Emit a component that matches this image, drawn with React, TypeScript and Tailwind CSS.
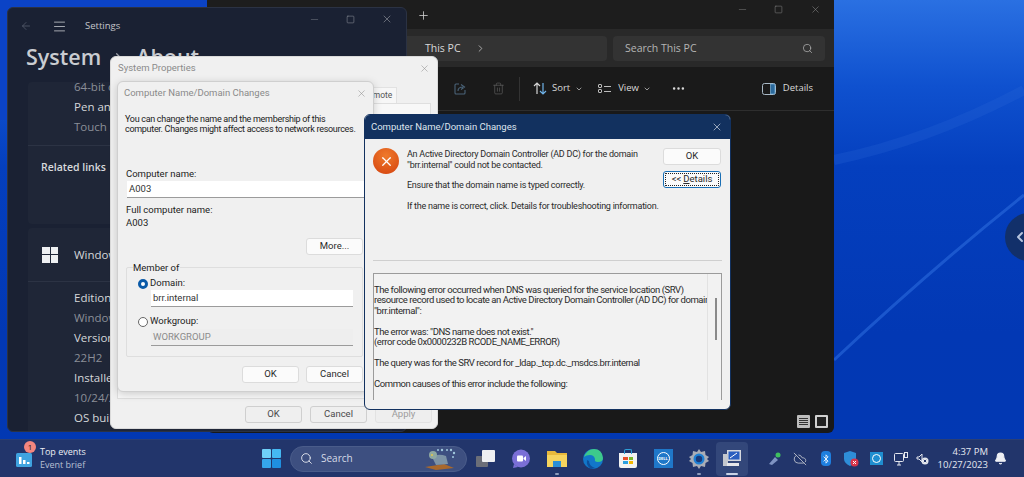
import React from "react";
import { X, Minus, Square, ArrowLeft, Menu, Plus, ChevronRight, ChevronDown, ChevronLeft, Search, Trash2, Ellipsis, Bell, Bluetooth, CloudOff } from "lucide-react";

const font = "font-['Open_Sans','Noto_Sans',sans-serif]";
const dialogFont = "font-['Roboto','Liberation_Sans',sans-serif]";

function Btn({ children, className = "" }: { children: React.ReactNode; className?: string }) {
  return (
    <div className={`h-[17px] w-[57px] flex items-center justify-center rounded-[3px] bg-[#fbfbfb] border border-[#dcdcdc] text-[9.5px] text-[#2a2a2a] ${className}`}>
      {children}
    </div>
  );
}

function SettingsRow({ children, dim }: { children: React.ReactNode; dim?: boolean }) {
  return <div className={`h-[20px] leading-[20px] text-[11.5px] whitespace-nowrap ${dim ? "text-[#8b8f98]" : "text-[#d5d7da]"}`}>{children}</div>;
}

function SettingsWindow() {
  return (
    <div className="absolute left-[7px] top-[7px] w-[400px] h-[425px] rounded-[6px] bg-[#1a2133] border border-[#2b3243] overflow-hidden flex flex-col">
      <div className="h-[36px] flex items-center text-[#c4c6cb] shrink-0">
        <ArrowLeft size={12} className="ml-[12px] text-[#5a6070]" strokeWidth={1.5} />
        <Menu size={15} className="ml-[20px]" strokeWidth={1.3} />
        <span className="ml-[18px] text-[9.5px]">Settings</span>
        <Minus size={11} className="ml-auto mr-[26px] mb-[14px] text-[#6a6f7c]" strokeWidth={1.3} />
        <Square size={9} className="mr-[26px] mb-[14px] text-[#9a9da6]" strokeWidth={1.3} />
        <X size={12} className="mr-[13px] mb-[14px] text-[#9a9da6]" strokeWidth={1.2} />
      </div>
      <div className="h-[26px] ml-[18px] flex items-center gap-[10px] text-[21.5px] font-semibold text-[#c9ccd1] shrink-0 leading-none">
        <span>System</span>
        <ChevronRight size={15} className="text-[#9a9da6]" />
        <span>About</span>
      </div>
      <div className="ml-[20px] mr-[14px] mt-[12px] h-[142px] bg-[#1f2637] rounded-[4px] shrink-0 flex flex-col">
        <div className="pl-[46px] h-[69px] border-b border-[#2c3344] -mt-[5px]">
          <SettingsRow dim>64-bit operating system</SettingsRow>
          <SettingsRow>Pen and touch</SettingsRow>
          <SettingsRow dim>Touch support</SettingsRow>
        </div>
        <div className="pl-[13px] pt-[14px] text-[10.5px] font-semibold text-[#d8dadd]">Related links</div>
      </div>
      <div className="ml-[20px] mr-[14px] mt-[4px] flex-1 bg-[#1f2637] rounded-t-[4px] flex flex-col">
        <div className="h-[54px] flex items-center pl-[14px] border-b border-[#2c3344] shrink-0">
          <div className="grid grid-cols-2 gap-[1px] w-[16px] h-[16px]">
            <i className="bg-[#eef0f2]" /><i className="bg-[#eef0f2]" /><i className="bg-[#eef0f2]" /><i className="bg-[#eef0f2]" />
          </div>
          <span className="ml-[16px] text-[11.5px] text-[#d5d7da]">Windows specifications</span>
        </div>
        <div className="pl-[46px] pt-[6px]">
          <SettingsRow>Edition</SettingsRow>
          <SettingsRow dim>Windows 11 Pro</SettingsRow>
          <SettingsRow>Version</SettingsRow>
          <SettingsRow dim>22H2</SettingsRow>
          <SettingsRow>Installed on</SettingsRow>
          <SettingsRow dim>10/24/2023</SettingsRow>
          <SettingsRow>OS build</SettingsRow>
        </div>
      </div>
    </div>
  );
}

function ExplorerWindow() {
  return (
    <div className="absolute left-[207px] -top-[4px] w-[627px] h-[437px] rounded-[6px] bg-[#191919] overflow-hidden flex flex-col text-[#d9d9d9]">
      <div className="h-[33px] bg-[#1d1d1d] flex items-start shrink-0 pt-[6px]">
        <Plus size={13} className="ml-[210px] mt-[7px] text-[#cfcfcf]" strokeWidth={1.5} />
        <Minus size={11} className="ml-auto mr-[26px] mt-[2px] text-[#6f6f6f]" strokeWidth={1.3} />
        <Square size={9} className="mr-[27px] mt-[3px] text-[#8c8c8c]" strokeWidth={1.3} />
        <X size={11} className="mr-[13px] mt-[2px] text-[#8c8c8c]" strokeWidth={1.2} />
      </div>
      <div className="h-[38px] bg-[#292929] flex items-center gap-[6px] pr-[9px] pt-[1px] shrink-0">
        <div className="flex-1 h-[25px] bg-[#333333] rounded-[4px] flex items-center pl-[218px] text-[10.5px]">
          <span>This PC</span>
          <ChevronRight size={11} className="ml-[14px]" strokeWidth={1.5} />
        </div>
        <div className="w-[212px] h-[25px] bg-[#333333] rounded-[4px] flex items-center px-[12px] text-[10.5px] text-[#b5b5b5]">
          <span>Search This PC</span>
          <Search size={11} className="ml-auto" strokeWidth={1.6} />
        </div>
      </div>
      <div className="h-[44px] bg-[#1a1a1a] border-b border-[#2e2e2e] flex items-center text-[9.5px] shrink-0">
        <svg width="13" height="13" viewBox="0 0 13 13" fill="none" stroke="#4a6378" strokeWidth="1.1" className="ml-[247px]">
          <path d="M5 2 H2 Q1 2 1 3 V11 Q1 12 2 12 H10 Q11 12 11 11 V8" />
          <path d="M4 9 Q4 5 9 5 M7 2.5 L10.5 5 L7 7.5" />
        </svg>
        <Trash2 size={13} className="ml-[25px] text-[#5c5c5c]" strokeWidth={1.3} />
        <div className="ml-[14px] w-px h-[24px] bg-[#333]" />
        <svg width="14" height="13" viewBox="0 0 14 13" fill="none" strokeWidth="1.2" className="ml-[13px]">
          <path d="M4 12 V1 M1 4 L4 1 L7 4" stroke="#d5d5d5" />
          <path d="M10 1 V12 M7 9 L10 12 L13 9" stroke="#6fb3ea" />
        </svg>
        <span className="ml-[5px]">Sort</span>
        <ChevronDown size={8} className="ml-[5px]" />
        <div className="ml-[15px] flex flex-col gap-[1px] text-[#bbb]">
          <div className="flex items-center gap-[2px]"><i className="w-[4px] h-[4px] border border-[#bbb] rounded-[1px]" /><i className="w-[7px] h-px bg-[#bbb]" /></div>
          <div className="flex items-center gap-[2px]"><i className="w-[4px] h-[4px] border border-[#bbb] rounded-[1px]" /><i className="w-[7px] h-px bg-[#bbb]" /></div>
        </div>
        <span className="ml-[7px]">View</span>
        <ChevronDown size={8} className="ml-[4px]" />
        <Ellipsis size={15} className="ml-[20px]" />
        <svg width="14" height="12" viewBox="0 0 14 12" fill="none" className="ml-auto">
          <rect x="0.5" y="0.5" width="13" height="11" rx="2" stroke="#a9b9c6" />
          <path d="M8.5 1 H12 Q13 1 13 2 V10 Q13 11 12 11 H8.5 Z" fill="#2c6a9c" stroke="#8cc4ee" strokeWidth="0.6" />
        </svg>
        <span className="ml-[7px] mr-[21px]">Details</span>
      </div>
      <div className="flex-1" />
      <div className="h-[21px] flex items-center justify-end gap-[5px] pr-[6px] pb-[2px] shrink-0">
        <div className="w-[13px] h-[13px] bg-[#bdbdbd] rounded-[1px] flex flex-col justify-center gap-[1px] px-[2px]">
          <i className="h-px bg-[#333]" /><i className="h-px bg-[#333]" /><i className="h-px bg-[#333]" /><i className="h-px bg-[#333]" />
        </div>
        <div className="w-[13px] h-[13px] border-2 border-[#d0d0d0] rounded-[1px] bg-[#222]" />
      </div>
    </div>
  );
}

function SystemProperties() {
  return (
    <div className={`absolute left-[110px] top-[56px] w-[328px] h-[373px] rounded-[6px] bg-[#f0f0f0] border border-[#dadada] flex flex-col ${dialogFont}`}>
      <div className="h-[23px] flex items-center pl-[7px] pr-[7px] text-[9.5px] text-[#8a8a8a] shrink-0">
        <span>System Properties</span>
        <X size={11} className="ml-auto text-[#8f8f8f]" strokeWidth={1.2} />
      </div>
      <div className="flex justify-end pr-[40px] h-[23px] items-end shrink-0">
        <div className="h-[16px] w-[60px] pl-[25px] bg-[#f7f7f7] border border-[#e2e2e2] border-b-0 text-[8.5px] leading-[15px] text-[#555]">Remote</div>
      </div>
      <div className="flex-1 mx-[6px] bg-[#f8f8f8] border border-[#dfdfdf]" />
      <div className="h-[29px] flex items-start justify-end gap-[8px] pr-[5px] pt-[7px] shrink-0">
        <Btn className="!bg-[#efefef] !border-[#cfcfcf] !text-[#4a4a4a]">OK</Btn>
        <Btn className="!bg-[#efefef] !border-[#cfcfcf] !text-[#4a4a4a]">Cancel</Btn>
        <Btn className="!bg-[#eeeeee] !border-[#e2e2e2] !text-[#9c9c9c]">Apply</Btn>
      </div>
    </div>
  );
}

function InputLine({ text, className = "" }: { text: string; className?: string }) {
  return (
    <div className={`h-[17px] bg-white border-b border-[#9b9b9b] pl-[2px] text-[9.5px] leading-[15px] text-[#333] ${className}`}>{text}</div>
  );
}

function NameDialog() {
  return (
    <div className={`absolute left-[117px] top-[81px] w-[257px] h-[311px] rounded-[6px] bg-[#f0f0f0] border border-[#cfcfcf] shadow-[0_2px_8px_rgba(0,0,0,0.18)] flex flex-col text-[#222] text-[9.5px] ${dialogFont}`}>
      <div className="h-[23px] flex items-center pl-[6px] pr-[6px] text-[#8a8a8a] shrink-0">
        <span className="text-[9.5px]">Computer Name/Domain Changes</span>
        <X size={11} className="ml-auto text-[#8f8f8f]" strokeWidth={1.2} />
      </div>
      <div className="pl-[7px] pt-[9px] leading-[10px] text-[9px] tracking-[-0.3px] whitespace-nowrap h-[64px] shrink-0">
        You can change the name and the membership of this<br />computer. Changes might affect access to network resources.
      </div>
      <div className="pl-[8px] leading-[10px] h-[12px] shrink-0">Computer name:</div>
      <InputLine text="A003" className="ml-[9px] shrink-0 w-[240px]" />
      <div className="pl-[8px] mt-[6px] leading-[11px] shrink-0">Full computer name:</div>
      <div className="pl-[8px] mt-[2px] leading-[11px] shrink-0">A003</div>
      <div className="flex justify-end pr-[10px] mt-[10px] shrink-0"><Btn>More...</Btn></div>
      <div className="relative mx-[8px] mt-[12px] h-[90px] border border-[#dedede] rounded-[2px] shrink-0 w-[237px] pl-[11px] pt-[9px]">
        <span className="absolute left-[6px] -top-[6px] bg-[#f0f0f0] pr-[1px] leading-[11px]">Member of</span>
        <div className="flex items-center h-[11px] mt-[1px]">
          <span className="w-[10px] h-[10px] rounded-full border-[3px] border-[#0a5aa8] bg-white shrink-0" />
          <span className="ml-[2px]">Domain:</span>
        </div>
        <InputLine text="brr.internal" className="ml-[13px] mr-[9px] mt-[1px]" />
        <div className="flex items-center h-[11px] mt-[9px]">
          <span className="w-[10px] h-[10px] rounded-full border border-[#666] bg-white shrink-0" />
          <span className="ml-[2px]">Workgroup:</span>
        </div>
        <InputLine text="WORKGROUP" className="ml-[13px] mr-[9px] mt-[2px] !bg-[#eeeeee] !text-[#8b8b8b]" />
      </div>
      <div className="flex justify-end gap-[7px] pr-[10px] mt-[9px] shrink-0">
        <Btn>OK</Btn>
        <Btn>Cancel</Btn>
      </div>
    </div>
  );
}

function ErrorDialog() {
  return (
    <div className={`absolute left-[364px] top-[114px] w-[367px] h-[296px] rounded-[6px] bg-[#f0f0f0] border border-[#12315f] overflow-hidden flex flex-col text-[9.5px] text-[#2a2a2a] ${dialogFont}`}>
      <div className="h-[24px] bg-[#12315f] flex items-center pl-[6px] pr-[7px] text-[#dfe5ee] text-[9.5px] shrink-0">
        <span>Computer Name/Domain Changes</span>
        <X size={12} className="ml-auto" strokeWidth={1.3} />
      </div>
      <div className="flex h-[121px] shrink-0 pl-[8px] pr-[9px]">
        <div className="w-[26px] h-[26px] mt-[9px] rounded-full bg-[radial-gradient(circle_at_50%_30%,#ef7a2c,#d4420e)] flex items-center justify-center shrink-0">
          <X size={15} className="text-white" strokeWidth={2} />
        </div>
        <div className="ml-[8px] pt-[10px] leading-[10.5px] text-[9px] whitespace-nowrap tracking-[-0.25px]">
          <div>An Active Directory Domain Controller (AD DC) for the domain<br />"brr.internal" could not be contacted.</div>
          <div className="mt-[10px]">Ensure that the domain name is typed correctly.</div>
          <div className="mt-[10px]">If the name is correct, click. Details for troubleshooting information.</div>
        </div>
        <div className="ml-auto pt-[9px] flex flex-col gap-[6px] shrink-0">
          <Btn className="!w-[58px]">OK</Btn>
          <Btn className="!w-[58px] !border-[#1a6fb5] outline-1 outline-dotted outline-offset-[-3px] outline-[#222]">&lt;&lt; <u className="ml-[2px]">D</u>etails</Btn>
        </div>
      </div>
      <div className="mx-[8px] h-px bg-[#cfcfcf] shrink-0" />
      <div className="relative mx-[8px] mt-[12px] flex-1 mb-[9px] bg-[#f2f2f2] border-t border-x border-[#9b9b9b] overflow-hidden leading-[10.4px] tracking-[-0.43px] whitespace-nowrap pt-[11px]">
        <div>The following error occurred when DNS was queried for the service location (SRV)</div>
        <div>resource record used to locate an Active Directory Domain Controller (AD DC) for domain</div>
        <div>"brr.internal":</div>
        <div className="h-[10.4px]" />
        <div>The error was: "DNS name does not exist."</div>
        <div>(error code 0x0000232B RCODE_NAME_ERROR)</div>
        <div className="h-[10.4px]" />
        <div>The query was for the SRV record for _ldap._tcp.dc._msdcs.brr.internal</div>
        <div className="h-[10.4px]" />
        <div>Common causes of this error include the following:</div>
        <div className="h-[10.4px]" />
        <div className="pl-[5px]">- The DNS SRV records required to locate a AD DC for the domain are not registered</div>
        <div className="absolute right-0 top-0 bottom-0 w-[14px] bg-[#f2f2f2] border-l border-[#e2e2e2]">
          <div className="absolute left-[7px] top-[24px] w-[2px] h-[42px] bg-[#8a8a8a]" />
        </div>
      </div>
    </div>
  );
}

const TaskSlot = ({ children, w = 36, active, running }: { children: React.ReactNode; w?: number; active?: boolean; running?: boolean }) => (
  <div style={{ width: w }} className={`relative h-[34px] flex items-center justify-center rounded-[4px] shrink-0 ${active ? "bg-[#33477a]" : ""}`}>
    {children}
    {running && <i className={`absolute bottom-[1px] h-[2px] rounded-full ${active ? "w-[12px] bg-[#c9d3e6]" : "w-[4px] bg-[#8e9cbc]"}`} />}
  </div>
);

function Taskbar() {
  return (
    <div className="absolute left-0 right-0 bottom-0 h-[38px] bg-[#22356b] border-t border-[#2b3f75] flex items-center text-[#e6e9f1]">
      <div className="relative w-[252px] shrink-0 pl-[16px] flex items-center">
        <svg width="16" height="14" viewBox="0 0 16 14" className="shrink-0 mt-[2px]">
          <rect width="16" height="14" rx="1.5" fill="#3fa3e0" />
          <rect x="3" y="4" width="2.5" height="7" fill="#fff" />
          <rect x="7" y="7" width="2.5" height="4" fill="#fff" />
          <rect x="11" y="9" width="2.5" height="2" fill="#fff" />
        </svg>
        <span className="absolute left-[24px] top-[-6px] w-[12px] h-[12px] rounded-full bg-[#f4867f] text-[#2a1a1a] text-[8px] leading-[12px] text-center">1</span>
        <div className="ml-[8px] leading-[13px] -mt-[2px]">
          <div className="text-[9px] text-[#eceef4]">Top events</div>
          <div className="text-[9px] text-[#b8c0d4]">Event brief</div>
        </div>
      </div>
      <TaskSlot w={38}>
        <svg width="19" height="19" viewBox="0 0 19 19">
          <rect x="0" y="0" width="9" height="9" rx="1" fill="#6fd0f8" />
          <rect x="10" y="0" width="9" height="9" rx="1" fill="#45b8f2" />
          <rect x="0" y="10" width="9" height="9" rx="1" fill="#35a6ec" />
          <rect x="10" y="10" width="9" height="9" rx="1" fill="#1f8fe0" />
        </svg>
      </TaskSlot>
      <div className="w-[177px] h-[26px] rounded-full bg-[#3d4f80] border border-[#4a5c8a] flex items-center pl-[9px] relative shrink-0">
        <Search size={13} className="text-[#e3e6ee]" strokeWidth={1.7} />
        <span className="ml-[8px] text-[10px] text-[#d6dbe7]">Search</span>
        <svg width="34" height="24" viewBox="0 0 34 24" className="absolute right-[8px] top-0">
          <path d="M1 20 L20 17 L30 21 L12 23 Z" fill="#a9682c" />
          <path d="M8 10 Q14 6 22 9 L24 17 L12 18 Z" fill="#7d93a6" />
          <circle cx="9" cy="8" r="4" fill="#8fa8a0" />
          <circle cx="8" cy="8" r="1" fill="#e6c64a" />
          <g fill="#9fc6dc">
            <circle cx="18" cy="3" r="1.2" /><circle cx="23" cy="3" r="1" /><circle cx="27" cy="3" r="1.2" />
            <circle cx="30" cy="6" r="1.2" /><circle cx="29" cy="10" r="1" /><circle cx="14" cy="3" r="1" />
          </g>
        </svg>
      </div>
      <div className="flex items-center shrink-0">
        <TaskSlot>
          <div className="relative w-[19px] h-[17px]">
            <i className="absolute left-0 bottom-0 w-[12px] h-[11px] bg-[#6b6e78] rounded-[1px]" />
            <i className="absolute right-0 top-0 w-[13px] h-[12px] bg-[#eff0f2] rounded-[1px]" />
          </div>
        </TaskSlot>
        <TaskSlot>
          <svg width="20" height="20" viewBox="0 0 20 20">
            <circle cx="10" cy="9.5" r="9" fill="#7a6fd6" />
            <path d="M3 15 L2 19 L7 18 Z" fill="#7a6fd6" />
            <rect x="6" y="6.5" width="6" height="6" rx="1" fill="#fff" />
            <path d="M12.5 9 L15 7 L15 12 L12.5 10 Z" fill="#fff" />
          </svg>
        </TaskSlot>
        <TaskSlot running>
          <svg width="20" height="18" viewBox="0 0 20 18">
            <path d="M0 1 H8 L10 3 H20 V17 H0 Z" fill="#e8b93c" />
            <rect x="0" y="5" width="20" height="12" fill="#f6d45e" />
            <rect x="6" y="11" width="8" height="6" fill="#2b8fd6" />
          </svg>
        </TaskSlot>
        <TaskSlot>
          <svg width="20" height="20" viewBox="0 0 20 20">
            <circle cx="10" cy="10" r="10" fill="#1277c9" />
            <path d="M1 8 Q4 0 11 0 Q19 0 20 9 Q20 13 15 13 Q11 13 12 10 Q11 6 7 6 Q3 6 1 8 Z" fill="#3dc98c" />
            <path d="M6 12 Q6 17 12 19 L8 20 Q3 17 4 11 Z" fill="#0d4f9c" />
          </svg>
        </TaskSlot>
        <TaskSlot w={34}>
          <div className="relative w-[18px] h-[15px] bg-[#f2f2f2] rounded-b-[2px] mt-[3px] grid grid-cols-2 gap-[1px] p-[4px]">
            <i className="absolute left-[5px] top-[-4px] w-[8px] h-[5px] border border-[#2d9fd8] border-b-0 rounded-t-[2px]" />
            <i className="bg-[#e8502a]" /><i className="bg-[#7ab829]" /><i className="bg-[#2c9fe0]" /><i className="bg-[#f5b800]" />
          </div>
        </TaskSlot>
        <TaskSlot w={36}>
          <div className="w-[19px] h-[19px] bg-[#1f77c9] flex items-center justify-center">
            <div className="w-[13px] h-[13px] rounded-full border border-white text-white text-[4px] font-bold flex items-center justify-center leading-none">DELL</div>
          </div>
        </TaskSlot>
        <TaskSlot w={35} running>
          <svg width="20" height="20" viewBox="0 0 20 20">
            <path d="M10 0 L12 3 L16 2 L16.5 6 L20 8 L18 10 L20 12 L16.5 14 L16 18 L12 17 L10 20 L8 17 L4 18 L3.5 14 L0 12 L2 10 L0 8 L3.5 6 L4 2 L8 3 Z" fill="#a9adb6" />
            <circle cx="10" cy="10" r="5.5" fill="#1e7fd4" />
            <circle cx="10" cy="10" r="3.2" fill="#1a3a7a" />
          </svg>
        </TaskSlot>
        <TaskSlot w={32} active running>
          <svg width="20" height="20" viewBox="0 0 20 20">
            <rect x="5" y="1" width="14" height="11" fill="#d5d8de" />
            <rect x="6.5" y="2.5" width="11" height="8" fill="#2a5fc0" />
            <path d="M8 9 L15 4" stroke="#fff" strokeWidth="1" />
            <rect x="1" y="5" width="5" height="12" fill="#c4c7cd" />
            <rect x="5" y="14" width="12" height="3" fill="#e6e6ea" />
          </svg>
        </TaskSlot>
      </div>
      <div className="ml-[13px] flex items-center shrink-0">
        <TaskSlot w={26}>
          <svg width="14" height="14" viewBox="0 0 14 14">
            <path d="M2 12 L8 5 L11 8 L5 13 Z" fill="#7f93c2" />
            <circle cx="11" cy="3" r="2.5" fill="#3fbf5f" />
          </svg>
        </TaskSlot>
        <TaskSlot w={26}><CloudOff size={14} className="text-[#b3b8c6]" strokeWidth={1.6} /></TaskSlot>
        <TaskSlot w={25}>
          <div className="w-[10px] h-[15px] rounded-[4px] bg-[#1e7fe0] flex items-center justify-center">
            <Bluetooth size={10} className="text-white" strokeWidth={2} />
          </div>
        </TaskSlot>
        <TaskSlot w={26}>
          <svg width="16" height="16" viewBox="0 0 16 16">
            <path d="M1 2 L7 0 L13 2 V8 Q13 12 7 15 Q1 12 1 8 Z" fill="#2e8ed8" />
            <circle cx="11.5" cy="11.5" r="4" fill="#d8344a" />
            <path d="M10 10 L13 13 M13 10 L10 13" stroke="#fff" strokeWidth="1" />
          </svg>
        </TaskSlot>
        <TaskSlot w={25}>
          <div className="w-[13px] h-[13px] bg-[#1f8ed0] flex items-center justify-center">
            <div className="w-[9px] h-[9px] rounded-full border border-white" />
          </div>
        </TaskSlot>
        <TaskSlot w={24}>
          <svg width="14" height="14" viewBox="0 0 14 14" fill="none" stroke="#e4e7ee" strokeWidth="1">
            <rect x="0.5" y="1.5" width="9" height="8" rx="1" />
            <path d="M5 10 V13 M3 13 H7" />
            <rect x="10.5" y="0.5" width="3" height="5" />
          </svg>
        </TaskSlot>
        <TaskSlot w={18}>
          <svg width="13" height="13" viewBox="0 0 13 13">
            <path d="M1 5 H3 L6 2 V10 L3 7 H1 Z" fill="none" stroke="#e4e7ee" strokeWidth="1" />
            <circle cx="9" cy="9" r="3.5" fill="#e4e7ee" />
            <path d="M7.8 7.8 L10.2 10.2 M10.2 7.8 L7.8 10.2" stroke="#22356b" strokeWidth="1" />
          </svg>
        </TaskSlot>
      </div>
      <div className="ml-auto flex items-center pr-[17px]">
        <div className="text-right leading-[13px] text-[9.5px] text-[#e6e9f1] -mt-[2px]">
          <div>4:37 PM</div>
          <div>10/27/2023</div>
        </div>
        <Bell size={13} className="ml-[6px] text-[#eef0f5] fill-[#eef0f5]" />
      </div>
    </div>
  );
}

export default function App() {
  return (
    <div className={`relative w-[1024px] h-[477px] overflow-hidden bg-[linear-gradient(180deg,#2a70e2_0%,#0f51cf_18%,#043fbe_35%,#0238b4_70%,#0238b2_100%)] ${font}`}>
      <div className="absolute left-0 top-0 w-[207px] h-[120px] bg-[#0b43c6]" />
      <svg className="absolute inset-0 pointer-events-none" width="1024" height="477" viewBox="0 0 1024 477">
        <path d="M834 360 Q930 270 1024 195" stroke="#2f70e0" strokeWidth="3" fill="none" opacity="0.55" />
        <path d="M834 160 Q930 140 1024 90" stroke="#2a66d8" strokeWidth="10" fill="none" opacity="0.25" />
      </svg>
      <ExplorerWindow />
      <SettingsWindow />
      <SystemProperties />
      <NameDialog />
      <ErrorDialog />
      <div className="absolute left-[1005px] top-[213px] w-[48px] h-[48px] rounded-full bg-[#12306a] flex items-center pl-[7px]">
        <ChevronLeft size={16} strokeWidth={3} className="text-[#b6c4de]" />
      </div>
      <Taskbar />
    </div>
  );
}
